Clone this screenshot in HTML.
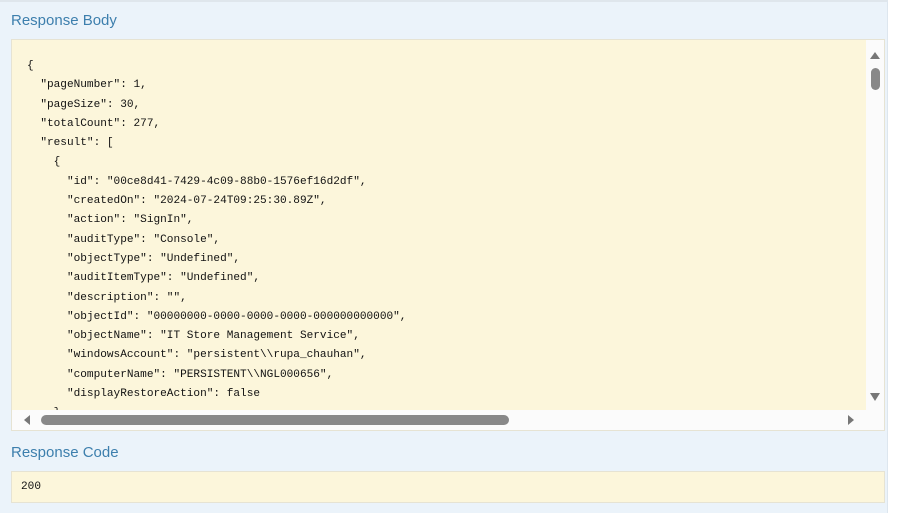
<!DOCTYPE html>
<html><head><style>
body{margin:0;width:903px;height:513px;background:#fff;overflow:hidden;font-family:"Liberation Sans",sans-serif}
.panel{position:absolute;left:0;top:0;width:888px;height:513px;background:#ebf3fa;border-right:1px solid #dde6ee;border-top:2px solid #dfe6ec;box-sizing:border-box}
h4{position:absolute;left:11px;margin:0;font-weight:normal;font-size:15px;color:#3d7fad}
.box{position:absolute;left:11px;width:874px;background:#fcf6db;border:1px solid #e6e3d3;box-sizing:border-box}
pre{margin:0;position:absolute;left:15px;top:17px;font-family:"Liberation Mono",monospace;font-size:11.1px;line-height:19.3px;color:#111}
.vs{position:absolute;left:854px;top:0;width:19px;height:390px;background:#fbfbfb}
.hs{position:absolute;left:0;top:370px;width:872px;height:20px;background:#fbfbfb}
</style></head><body>
<div class="panel"></div>
<h4 style="top:12px">Response Body</h4>
<div class="box" style="top:39px;height:392px;overflow:hidden">
<pre>{
  "pageNumber": 1,
  "pageSize": 30,
  "totalCount": 277,
  "result": [
    {
      "id": "00ce8d41-7429-4c09-88b0-1576ef16d2df",
      "createdOn": "2024-07-24T09:25:30.89Z",
      "action": "SignIn",
      "auditType": "Console",
      "objectType": "Undefined",
      "auditItemType": "Undefined",
      "description": "",
      "objectId": "00000000-0000-0000-0000-000000000000",
      "objectName": "IT Store Management Service",
      "windowsAccount": "persistent\\rupa_chauhan",
      "computerName": "PERSISTENT\\NGL000656",
      "displayRestoreAction": false
    }</pre>
<div class="vs">
<svg width="19" height="370" style="position:absolute;left:0;top:0">
<polygon points="4,19 14,19 9,12" fill="#777"/>
<rect x="5" y="28" width="9" height="22" rx="4.5" fill="#888"/>
<polygon points="4,353 14,353 9,361" fill="#777"/>
</svg></div>
<div class="hs">
<svg width="872" height="20" style="position:absolute;left:0;top:0">
<polygon points="18,5 18,15 12,10" fill="#777"/>
<rect x="29" y="5" width="468" height="10" rx="5" fill="#888"/>
<polygon points="836,5 836,15 842,10" fill="#777"/>
</svg></div>
</div>
<h4 style="top:444px">Response Code</h4>
<div class="box" style="top:471px;height:32px"><pre style="left:9px;top:6px">200</pre></div>
</body></html>
